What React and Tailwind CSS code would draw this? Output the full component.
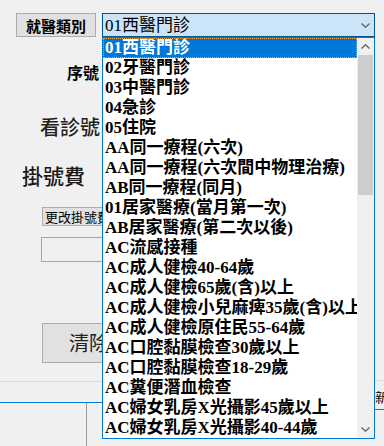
import React from 'react';

const items = [
  '01西醫門診',
  '02牙醫門診',
  '03中醫門診',
  '04急診',
  '05住院',
  'AA同一療程(六次)',
  'AA同一療程(六次間中物理治療)',
  'AB同一療程(同月)',
  '01居家醫療(當月第一次)',
  'AB居家醫療(第二次以後)',
  'AC流感接種',
  'AC成人健檢40-64歲',
  'AC成人健檢65歲(含)以上',
  'AC成人健檢小兒麻痺35歲(含)以上',
  'AC成人健檢原住民55-64歲',
  'AC口腔黏膜檢查30歲以上',
  'AC口腔黏膜檢查18-29歲',
  'AC糞便潛血檢查',
  'AC婦女乳房X光攝影45歲以上',
  'AC婦女乳房X光攝影40-44歲',
];

const serif = { fontFamily: '"Liberation Serif", "Noto Sans CJK TC", serif' };

const Chevron = ({ up = false, className = '' }) => (
  <svg className={className} width="9" height="5" viewBox="0 0 9 5" fill="none" stroke="#606060" strokeWidth="1.3">
    {up ? <path d="M0.5 4.5 L4.5 0.8 L8.5 4.5" /> : <path d="M0.5 0.5 L4.5 4.2 L8.5 0.5" />}
  </svg>
);

const App = () => {
  const selected = 0;

  return (
    <div
      className="relative h-[446px] w-[384px] overflow-hidden bg-[#f0f0f0] text-black"
      style={{ fontFamily: '"Noto Sans CJK TC", "Liberation Sans", sans-serif' }}
    >
      {/* Top row */}
      <div className="flex items-start gap-[6px] pl-[16px] pt-[13px]">
        <button className="flex h-[24px] w-[80px] items-center justify-center border border-[#adadad] bg-[#e1e1e1] text-[15px] font-bold leading-none">
          就醫類別
        </button>
        <div className="flex h-[24px] w-[273px] items-center justify-between border border-[#005499] bg-[#cce4f7] pl-[2px] pr-[4px]">
          <span className="text-[17px] leading-none" style={serif}>01西醫門診</span>
          <Chevron className="mt-[1px]" />
        </div>
      </div>

      {/* Body */}
      <div className="flex">
        <div className="flex flex-1 flex-col">
          <div className="mt-[25px] pl-[67px] text-[16px] font-bold leading-[20px]">序號</div>
          <div className="mt-[33px] whitespace-nowrap pl-[40px] text-[20px] font-medium leading-[24px] text-[#222]">看診號</div>
          <div className="mt-[24px] pl-[22px] text-[21px] font-medium leading-[24px] text-[#1a1a1a]">掛號費</div>
          <button className="ml-[42px] mt-[20px] flex h-[19px] w-[84px] items-center border border-[#adadad] bg-[#e1e1e1] pl-[2px] text-[13px] leading-none">
            更改掛號費
          </button>
          <div className="ml-[41px] mt-[11px] h-[25px] w-[120px] border border-[#a6a6a6] bg-[#f0f0f0]" />
          <button className="ml-[42px] mt-[61px] flex h-[40px] w-[94px] items-center justify-center border border-[#adadad] bg-[#e1e1e1] text-[20px] leading-none text-[#222]">
            清除
          </button>
          <div className="mt-[18px] h-px bg-[#d9d9d9]" />
          <div className="mt-[20px] h-px bg-[#0078d7]" />
          <div className="ml-[86px] h-[44px] w-px bg-[#9a9a9a]" />
        </div>
        <div className="flex w-[9px] flex-col">
          <div className="mt-[343px] h-px bg-[#d9d9d9]" />
          <div className="mt-[9px] whitespace-nowrap text-[13px] leading-[13px]">新</div>
          <div className="mt-[6px] h-px bg-[#0078d7]" />
        </div>
      </div>

      {/* Open dropdown list */}
      <div className="absolute left-[102px] top-[37px] flex h-[402px] w-[273px] border border-[#0078d7] bg-white">
        <div className="flex w-[254px] flex-col" style={serif}>
          {items.map((item, i) => (
            <div
              key={item}
              className={`h-[20px] shrink-0 overflow-hidden whitespace-nowrap pl-[2px] text-[17px] font-bold leading-[20px] ${
                i === selected
                  ? 'bg-[#0078d7] text-white outline-1 -outline-offset-1 outline-dotted outline-[#f0a040]'
                  : 'text-black'
              }`}
            >
              {item}
            </div>
          ))}
        </div>
        <div className="flex w-[17px] flex-col bg-[#f0f0f0]">
          <div className="flex h-[17px] items-center justify-center">
            <Chevron up />
          </div>
          <div className="ml-[1px] h-[140px] w-[15px] bg-[#cdcdcd]" />
          <div className="flex-1" />
          <div className="flex h-[17px] items-center justify-center">
            <Chevron />
          </div>
        </div>
      </div>
    </div>
  );
};

export default App;
